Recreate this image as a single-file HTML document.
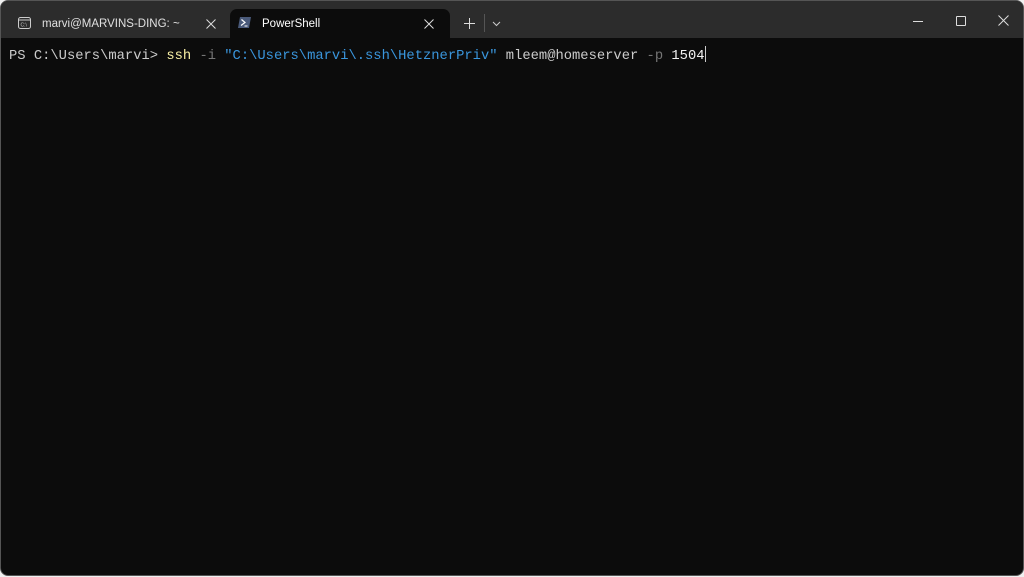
<!DOCTYPE html>
<html><head><meta charset="utf-8"><style>
*{margin:0;padding:0;box-sizing:border-box}
html,body{width:1024px;height:577px;background:#f0f0f0;overflow:hidden}
.win{position:absolute;left:0;top:0;width:1024px;height:576px;background:#0c0c0c;border:1px solid #555;border-radius:8px;overflow:hidden}
.bar{position:absolute;left:0;top:0;width:1024px;height:37px;background:#2c2c2c}
.tab{position:absolute;top:8px;height:29px;font:11.5px "Liberation Sans",sans-serif;color:#fff}
.t1{left:8px;width:220px;color:#e0e0e0}
.t2{left:229px;width:220px;background:#0c0c0c;border-radius:7px 7px 0 0}
.tab span{position:absolute;top:9px}
.term{position:absolute;left:8px;top:45px;font:13.8px "Liberation Mono",monospace;color:#cccccc;white-space:pre;letter-spacing:0}
</style></head><body>
<div class="win">
<div class="bar">
<div class="tab t1">
<svg style="position:absolute;left:9px;top:8px" width="13" height="12"><rect x="0.5" y="0.5" width="12" height="11" rx="2" fill="none" stroke="#ccc"/><line x1="1" y1="3" x2="12" y2="3" stroke="#ccc"/><text x="2.5" y="9.5" font-size="5" fill="#ccc" font-family="Liberation Sans">C:\</text></svg>
<span style="left:33px">marvi@MARVINS-DING: ~</span>
<svg style="position:absolute;left:197px;top:10px" width="10" height="10"><path d="M0.5 0.5 L9.5 9.5 M9.5 0.5 L0.5 9.5" stroke="#ddd"/></svg></div>
<div class="tab t2">
<svg style="position:absolute;left:8px;top:8px" width="13" height="11"><polygon points="2,0 13,0 11,11 0,11" fill="#4a5a7a"/><path d="M3.5 2.5 L7 5.5 L3 8.5" stroke="#fff" stroke-width="1.2" fill="none"/><line x1="6.5" y1="9" x2="9.5" y2="9" stroke="#fff"/></svg>
<span style="left:32px">PowerShell</span>
<svg style="position:absolute;left:194px;top:10px" width="10" height="10"><path d="M0.5 0.5 L9.5 9.5 M9.5 0.5 L0.5 9.5" stroke="#ddd"/></svg></div>
<svg style="position:absolute;left:463px;top:17px" width="11" height="11"><path d="M5.5 0 V11 M0 5.5 H11" stroke="#ddd"/></svg>
<div style="position:absolute;left:483px;top:13px;width:1px;height:18px;background:#555"></div>
<svg style="position:absolute;left:491px;top:20px" width="9" height="6"><path d="M1 1 L4.5 4.5 L8 1" stroke="#ccc" fill="none"/></svg>
<div style="position:absolute;left:912px;top:20px;width:10px;height:1px;background:#ddd"></div>
<div style="position:absolute;left:955px;top:15px;width:10px;height:10px;border:1px solid #ddd;border-radius:1px"></div>
<svg style="position:absolute;left:997px;top:14px" width="11" height="11"><path d="M0.5 0.5 L10.5 10.5 M10.5 0.5 L0.5 10.5" stroke="#ddd"/></svg>
</div>
<div class="term">PS C:\Users\marvi&gt; <span style="color:#f9f1a5">ssh</span> <span style="color:#767676">-i</span> <span style="color:#3a96dd">"C:\Users\marvi\.ssh\HetznerPriv"</span> mleem@homeserver <span style="color:#767676">-p</span> <span style="color:#f2f2f2">1504</span><span style="display:inline-block;width:1px;height:16px;background:#ccc;vertical-align:-3px"></span></div>
</div>
</body></html>
